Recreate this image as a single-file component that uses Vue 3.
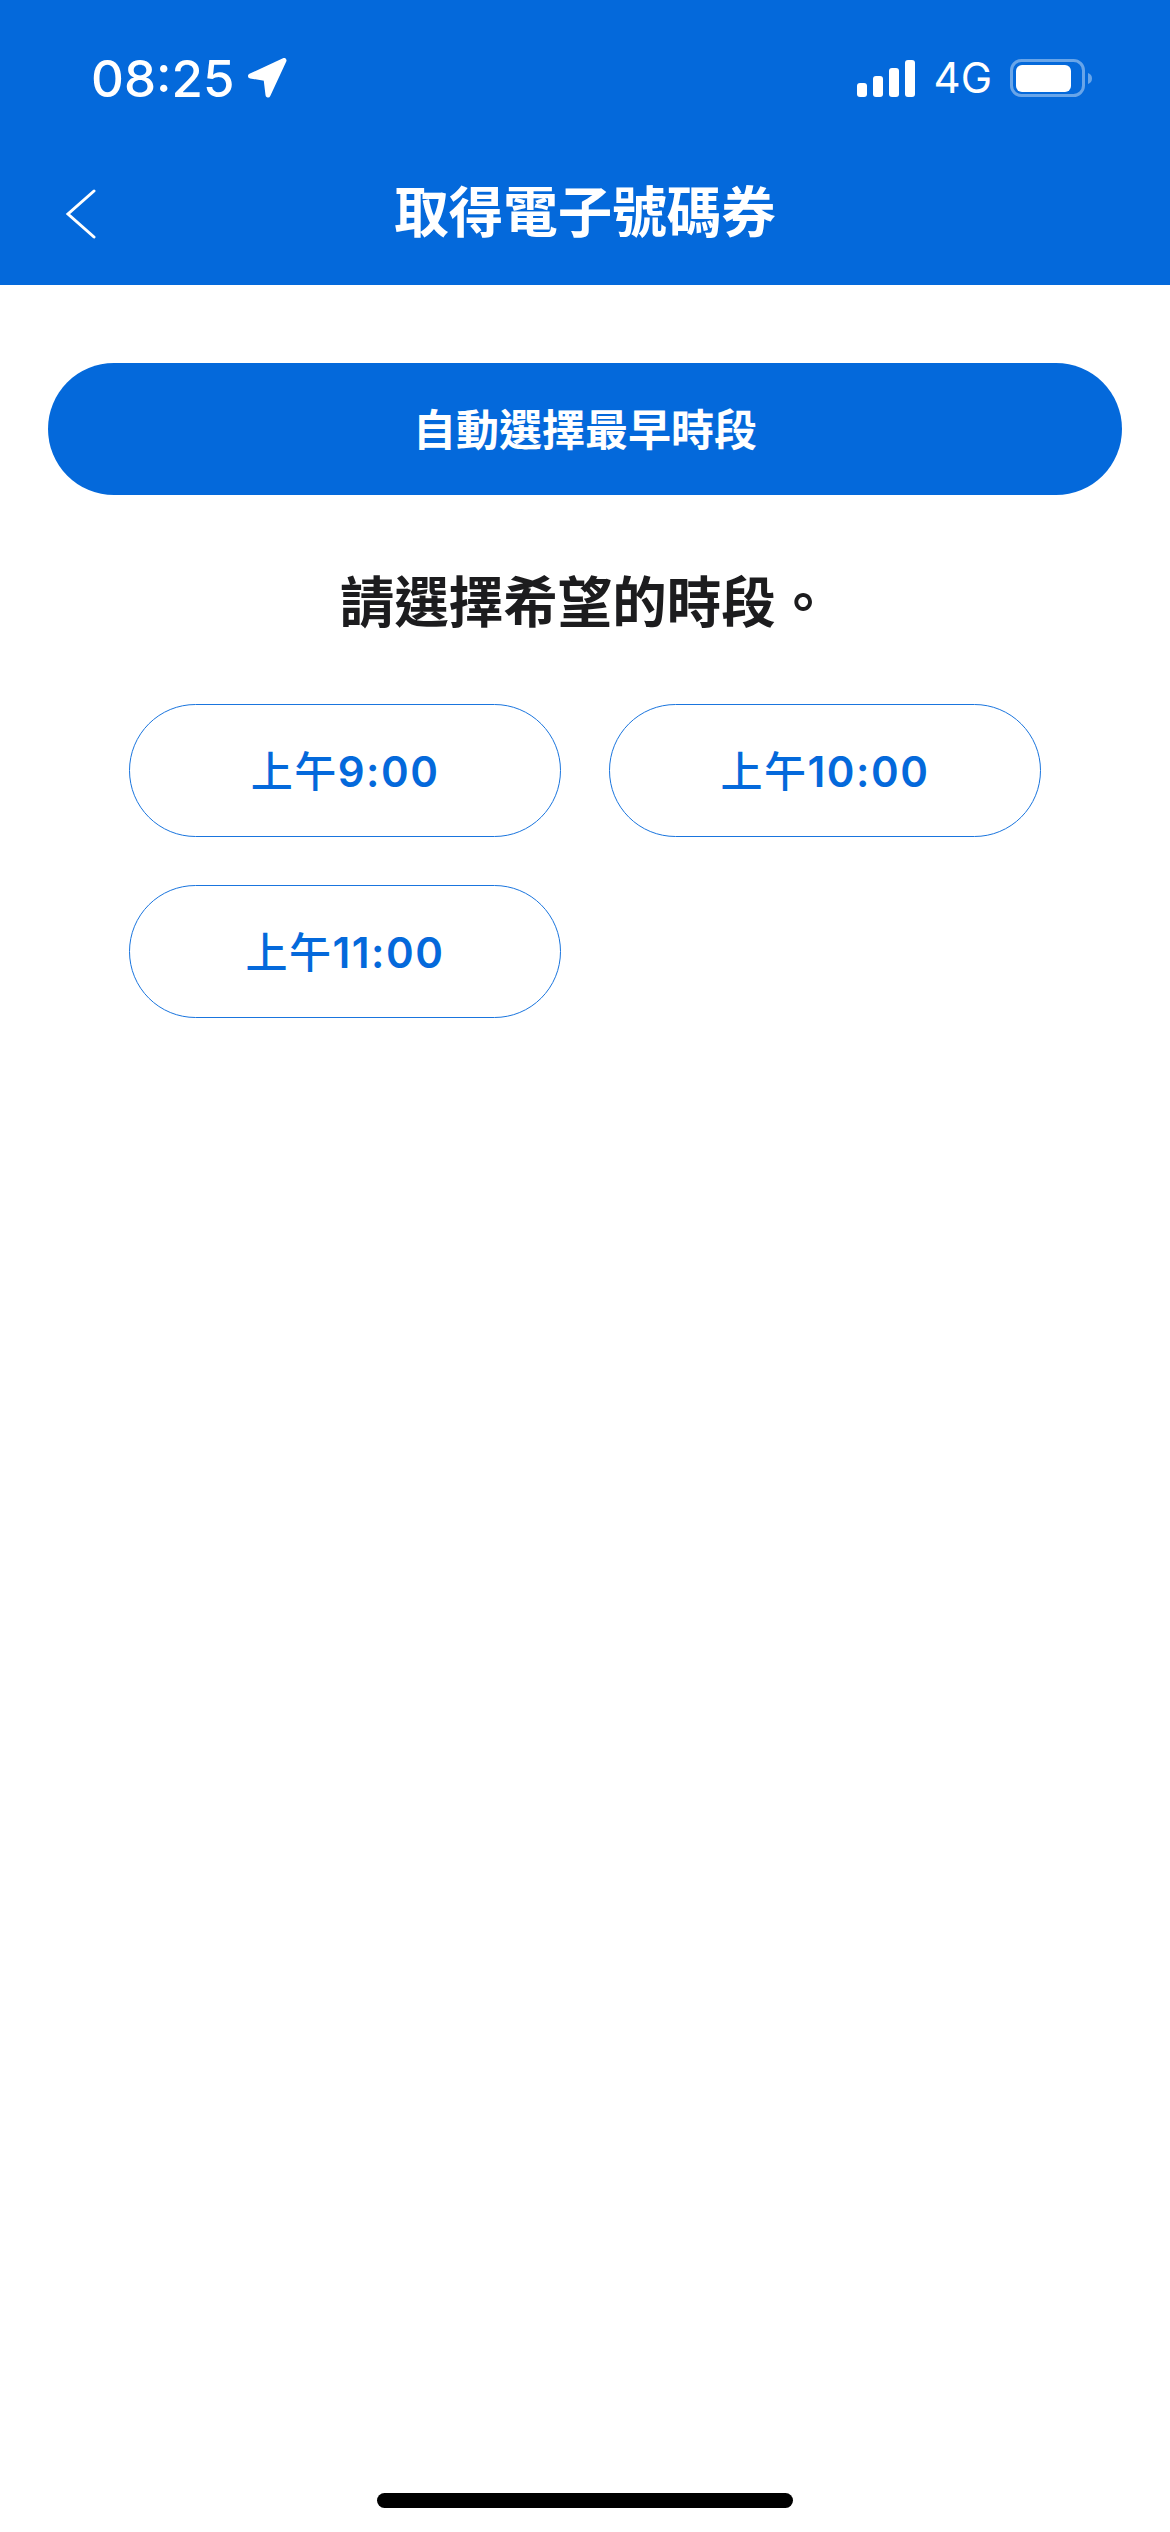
<script setup>
const slots = [
    { period: '上午', time: '9:00' },
    { period: '上午', time: '10:00' },
    { period: '上午', time: '11:00' },
];
</script>

<template>
    <div class="page">
        <header class="top">
            <div class="status">
                <div class="status-left">
                    <span class="time">08:25</span>
                    <svg class="arrow" width="40" height="40" viewBox="0 0 40 40">
                        <path d="M3.5 18 L37 2.5 L21 37 L19 20.5 Z" fill="#fff" stroke="#fff" stroke-width="5" stroke-linejoin="round" />
                    </svg>
                </div>
                <div class="status-right">
                    <svg class="signal" width="58" height="37" viewBox="0 0 58 37" fill="#fff">
                        <rect x="0" y="23" width="10" height="14" rx="3" />
                        <rect x="16" y="16" width="10" height="21" rx="3" />
                        <rect x="32" y="8" width="10" height="29" rx="3" />
                        <rect x="48" y="0" width="10" height="37" rx="3" />
                    </svg>
                    <span class="net">4G</span>
                    <svg width="82" height="38" viewBox="0 0 82 38">
                        <rect x="1.5" y="1.5" width="72" height="35" rx="10" fill="none" stroke="#fff" stroke-opacity="0.4" stroke-width="3" />
                        <rect x="6" y="6" width="55" height="27" rx="6" fill="#fff" />
                        <path d="M78 14 C81 15 82 17 82 19.5 C82 22 81 24 78 25 Z" fill="#fff" fill-opacity="0.4" />
                    </svg>
                </div>
            </div>
            <nav class="nav">
                <svg class="back" width="32" height="50" viewBox="0 0 32 50">
                    <path d="M29 2 L3 25 L29 48" fill="none" stroke="#fff" stroke-width="3" stroke-linecap="round" stroke-linejoin="miter" />
                </svg>
                <h1 class="title">取得電子號碼券</h1>
                <span></span>
            </nav>
        </header>

        <main class="content">
            <button class="auto-btn">自動選擇最早時段</button>
            <h2 class="prompt">請選擇希望的時段。</h2>
            <div class="slots">
                <button v-for="slot in slots" :key="slot.time" class="slot-btn">
                    <span class="slot-period">{{ slot.period }}</span>{{ slot.time }}
                </button>
            </div>
        </main>

        <div class="home-bar"></div>
    </div>
</template>

<style scoped>
.page {
    display: flex;
    flex-direction: column;
    width: 1170px;
    height: 2532px;
    background: #fff;
    font-family: Inter, "Noto Sans CJK TC", sans-serif;
}

/* Blue header */
.top {
    height: 285px;
    background: #0469db;
    color: #fff;
}

.status {
    display: flex;
    justify-content: space-between;
    align-items: center;
    height: 156px;
    padding: 0 78px 0 91px;
}

.status-left {
    display: flex;
    align-items: center;
    gap: 13px;
}

.time {
    padding-top: 2px;
    font-size: 51px;
    font-weight: 500;
    line-height: 60px;
}

.status-right {
    display: flex;
    align-items: center;
    gap: 18px;
}

.signal {
    margin-right: 1px;
}

.net {
    font-size: 42px;
    line-height: 48px;
}

.nav {
    display: grid;
    grid-template-columns: 1fr auto 1fr;
    align-items: center;
    height: 112px;
    padding: 0 65px;
}

.back {
    margin-top: 3px;
}

.title {
    margin: 0 0 6px;
    font-family: "Noto Sans CJK TC", sans-serif;
    font-size: 54.5px;
    font-weight: 700;
    line-height: 64px;
}

/* Body */
.content {
    display: flex;
    flex-direction: column;
    padding: 78px 48px 0;
}

.auto-btn {
    height: 132px;
    padding-bottom: 6px;
    border: none;
    border-radius: 66px;
    background: #0469db;
    color: #fff;
    font-family: "Noto Sans CJK TC", sans-serif;
    font-size: 43px;
    font-weight: 700;
}

.prompt {
    margin: 77px 0 78px;
    color: #1c1c1e;
    font-family: "Noto Sans CJK TC", sans-serif;
    font-size: 54.5px;
    font-weight: 700;
    line-height: 54px;
    text-align: center;
}

.slots {
    display: grid;
    grid-template-columns: 432px 432px;
    gap: 48px;
    justify-content: center;
}

.slot-btn {
    height: 133px;
    padding-bottom: 6px;
    border: 1px solid #1a75de;
    border-radius: 67px;
    background: #fff;
    color: #0469db;
    font-family: Inter, "Noto Sans CJK TC", sans-serif;
    font-size: 42px;
    font-weight: 600;
    letter-spacing: 1.5px;
}

.slot-period {
    font-weight: 500;
}

/* Home indicator */
.home-bar {
    align-self: center;
    width: 416px;
    height: 15px;
    margin-top: auto;
    margin-bottom: 24px;
    border-radius: 8px;
    background: #000;
}
</style>
